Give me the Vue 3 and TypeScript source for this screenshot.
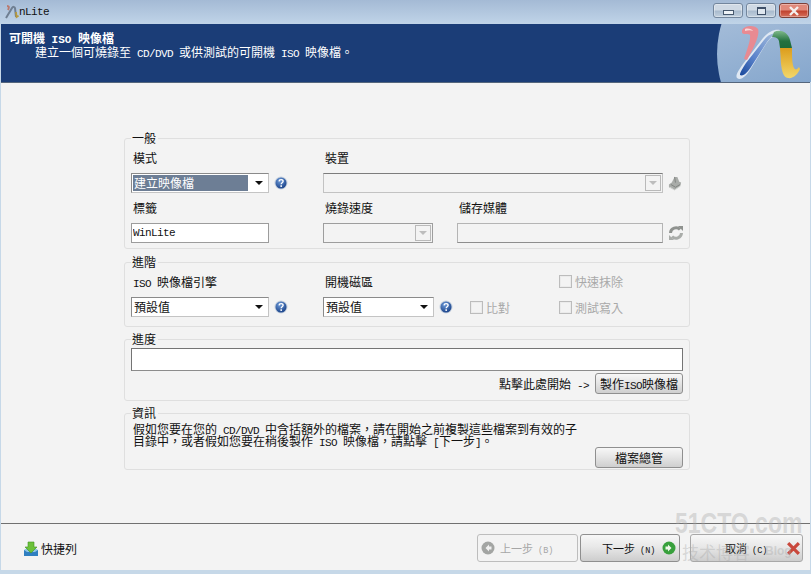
<script setup lang="ts">
const helpIcon = '#icon-help'
</script>

<template>
  <div class="window">
    <svg class="defs" width="0" height="0" aria-hidden="true">
      <defs>
        <radialGradient id="help-fill" cx="40%" cy="30%" r="75%">
          <stop offset="0" stop-color="#6d9ad8" />
          <stop offset="1" stop-color="#173f86" />
        </radialGradient>
        <symbol id="icon-help" viewBox="0 0 14 14">
          <circle cx="7" cy="7" r="6.5" fill="#c5d0de" />
          <circle cx="7" cy="7" r="5.5" fill="url(#help-fill)" />
          <path d="M5 5.4c.2-1.300 1.100-1.800 2.100-1.800 1.200 0 2 .7 2 1.700 0 1.500-1.900 1.500-1.900 2.900" fill="none" stroke="#fff" stroke-width="1.400" />
          <rect x="6.400" y="9.300" width="1.600" height="1.600" fill="#fff" />
        </symbol>
      </defs>
    </svg>

    <div class="titlebar">
      <svg class="app-icon" viewBox="0 0 16 16" width="16" height="16">
        <path d="M3 14 9 4c1-1.600 2.500-1.400 3 0l1 9" fill="none" stroke="#6f7f92" stroke-width="2" />
        <path d="M4 2c2 0 2.500 1 1 4" fill="none" stroke="#b9796f" stroke-width="2" />
        <path d="M13 8l.6 5 2-1.200" fill="none" stroke="#b79a3c" stroke-width="1.800" />
      </svg>
      <span class="lat app-name">nLite</span>
      <div class="win-buttons">
        <div class="win-btn">
          <span class="glyph-min"></span>
        </div>
        <div class="win-btn">
          <span class="glyph-max"></span>
        </div>
        <div class="win-btn win-btn--close">
          <svg viewBox="0 0 12 10" width="12" height="10">
            <path d="M2 1l8 8M10 1 2 9" stroke="#f4f0ee" stroke-width="2.400" />
          </svg>
        </div>
      </div>
    </div>

    <header class="banner">
      <div class="banner__text">
        <div class="banner__title">可開機<span class="lat"> ISO </span>映像檔</div>
        <div class="banner__sub">建立一個可燒錄至<span class="lat"> CD/DVD </span>或供測試的可開機<span class="lat"> ISO </span>映像檔。</div>
      </div>
      <svg class="banner__logo" viewBox="0 0 94 58" width="94" height="58">
        <defs>
          <linearGradient id="disc" x1="0" y1="0" x2="0.3" y2="1">
            <stop offset="0" stop-color="#bccde2" />
            <stop offset="1" stop-color="#6f97c4" />
          </linearGradient>
          <linearGradient id="arch" x1="0" y1="0" x2="0" y2="1">
            <stop offset="0" stop-color="#7fb98a" />
            <stop offset="0.6" stop-color="#23713f" />
            <stop offset="1" stop-color="#1d6b39" />
          </linearGradient>
          <linearGradient id="stem" x1="0" y1="0" x2="0" y2="1">
            <stop offset="0" stop-color="#dc9d1c" />
            <stop offset="1" stop-color="#f3d76a" />
          </linearGradient>
          <linearGradient id="rise" x1="0" y1="1" x2="1" y2="0">
            <stop offset="0" stop-color="#17479b" />
            <stop offset="0.4" stop-color="#5b83cb" />
            <stop offset="1" stop-color="#a8c0dc" />
          </linearGradient>
        </defs>
        <circle cx="103" cy="30" r="103" fill="url(#disc)" />
        <path d="M20 54c-2-3 2-8 6-14L46 14c6-7 12-9 17-8l-3 6c-4 0-7 2-11 8L33 46c-4 6-9 11-13 8z" fill="#dfe8f3" />
        <path d="M23 51c0-3 3-7 6-12L47 16c4-5 8-7 13-7-4 2-7 5-10 9L34 43c-3 5-8 10-11 8z" fill="url(#rise)" />
        <path d="M25 6c3-5 13-5 16-1 2 5-3 17-11 31l-3-1c3-9 7-20 6-24-1-2-6 0-8-2z" fill="#e88a92" />
        <path d="M28 5c3-1 7 0 8 2-2-1-5-1-8 0z" fill="#f8d7da" />
        <path d="M57 8c6-3 14 0 16 8l2 8H63l-1-7c-1-3-3-4-7-4z" fill="url(#arch)" />
        <path d="M63 24h12c0 8 0 16 2 20 1 2 3 2 5-1l1 2c-2 5-7 10-12 9-5-1-6-7-7-14z" fill="url(#stem)" />
      </svg>
    </header>

    <main class="content">
      <section class="group group--general">
        <span class="legend">一般</span>
        <span class="label col-a">模式</span>
        <span class="label col-c">裝置</span>

        <div class="combo col-a">
          <span class="combo__value combo__value--selected">建立映像檔</span>
          <span class="arrow"></span>
        </div>
        <svg class="help" width="14" height="14"><use :href="helpIcon" /></svg>
        <div class="combo combo--off col-device">
          <span class="combo__value"></span>
          <span class="drop-off"><span class="arrow arrow--off"></span></span>
        </div>
        <svg class="side-icon" viewBox="0 0 16 16" width="15" height="15">
          <path d="M7 1h3l2 5 2 1-1 4-6 4-6-3v-3l3-2z" fill="#a9aca9" />
          <path d="M3 9l5 3 5-3M7 1l1 6" fill="none" stroke="#7f827f" />
          <path d="M2 12l5 3 6-4" fill="none" stroke="#d8dad8" />
        </svg>

        <span class="label col-a">標籤</span>
        <span class="label col-c">燒錄速度</span>
        <span class="label col-e">儲存媒體</span>

        <input class="field col-a" value="WinLite" />
        <span></span>
        <div class="combo combo--off combo--inset col-c">
          <span class="combo__value"></span>
          <span class="drop-off"><span class="arrow arrow--off"></span></span>
        </div>
        <span></span>
        <div class="field field--off col-e"></div>
        <svg class="side-icon" viewBox="0 0 16 16" width="16" height="16">
          <path d="M2.500 8a5.500 5.500 0 0 1 9.500-3.500" fill="none" stroke="#8f928f" stroke-width="3" />
          <path d="M10 1h5v5z" fill="#8f928f" />
          <path d="M13.500 8a5.500 5.500 0 0 1-9.500 3.500" fill="none" stroke="#a9aca9" stroke-width="3" />
          <path d="M6 15H1v-5z" fill="#a9aca9" />
        </svg>
      </section>

      <section class="group group--advanced">
        <span class="legend">進階</span>
        <span class="label col-a"><span class="lat">ISO </span>映像檔引擎</span>
        <span class="label col-c">開機磁區</span>
        <label class="check col-f"><span class="check__box"></span>快速抹除</label>

        <div class="combo col-a">
          <span class="combo__value">預設值</span>
          <span class="arrow"></span>
        </div>
        <svg class="help" width="14" height="14"><use :href="helpIcon" /></svg>
        <div class="combo col-c">
          <span class="combo__value">預設值</span>
          <span class="arrow"></span>
        </div>
        <svg class="help" width="14" height="14"><use :href="helpIcon" /></svg>
        <label class="check"><span class="check__box"></span>比對</label>
        <label class="check"><span class="check__box"></span>測試寫入</label>
      </section>

      <section class="group group--progress">
        <span class="legend">進度</span>
        <div class="progress"></div>
        <div class="progress__row">
          <span>點擊此處開始<span class="lat"> -&gt;</span></span>
          <button class="btn" type="button">製作<span class="lat">ISO</span>映像檔</button>
        </div>
      </section>

      <section class="group group--info">
        <span class="legend">資訊</span>
        <p class="info">
          假如您要在您的<span class="lat"> CD/DVD </span>中含括額外的檔案&#xFF0C;請在開始之前複製這些檔案到有效的子<br />
          目錄中&#xFF0C;或者假如您要在稍後製作<span class="lat"> ISO </span>映像檔&#xFF0C;請點擊<span class="lat"> [</span>下一步<span class="lat">]</span>。
        </p>
        <button class="btn btn--end" type="button">檔案總管</button>
      </section>
    </main>

    <footer class="footer">
      <a class="shortcut">
        <svg viewBox="0 0 16 16" width="16" height="16">
          <path d="M1 9h14v6H1z" fill="#2f7fc0" />
          <path d="M1 9l3-2h8l3 2-3 2H4z" fill="#8dc2e6" />
          <path d="M5 1h6v5h3l-6 6-6-6h3z" fill="#6cc13a" stroke="#3f9423" stroke-width=".6" />
        </svg>
        快捷列
      </a>
      <div class="nav">
        <button class="nav-btn nav-btn--off" type="button">
          <svg viewBox="0 0 14 14" width="14" height="14">
            <circle cx="7" cy="7" r="6.500" fill="#a3a5a3" />
            <path d="M8 3.500 4.500 7 8 10.500V8.500h2.500v-3H8z" fill="#f0f0f0" />
          </svg>
          <span>上一步<span class="lat"> (B)</span></span>
        </button>
        <button class="nav-btn nav-btn--next" type="button">
          <span>下一步<span class="lat"> (N)</span></span>
          <svg viewBox="0 0 14 14" width="14" height="14">
            <circle cx="7" cy="7" r="6.500" fill="#38a03c" />
            <path d="M6 3.500 9.500 7 6 10.500V8.500H3.500v-3H6z" fill="#eef7ea" />
          </svg>
        </button>
        <button class="nav-btn nav-btn--cancel" type="button">
          <span>取消<span class="lat"> (C)</span></span>
          <svg viewBox="0 0 14 14" width="15" height="15">
            <path d="M2 2l10 10M12 2 2 12" stroke="#c9483c" stroke-width="3" />
          </svg>
        </button>
      </div>
    </footer>

    <div class="watermark" aria-hidden="true">
      <div class="watermark__site">51CTO.com</div>
      <div class="watermark__tag">技术博客<span>Blog</span></div>
    </div>
  </div>
</template>

<style>
html,
body {
  margin: 0;
  overflow: hidden;
}
</style>

<style scoped>
.window {
  position: relative;
  width: 811px;
  height: 574px;
  box-sizing: border-box;
  padding: 0 1px 4px;
  display: flex;
  flex-direction: column;
  background: #c6d8e8;
  color: #111;
  font-family: "Noto Sans CJK TC", "Liberation Sans", sans-serif;
  font-size: 12px;
  line-height: 17px;
  overflow: hidden;
}
.defs {
  position: absolute;
}
.lat {
  font-family: "Liberation Mono", monospace;
  font-size: 11px;
  letter-spacing: -0.6px;
  line-height: 0;
  white-space: pre;
}

/* title bar */
.titlebar {
  height: 24px;
  margin: 0 -1px;
  padding: 0 2px 0 3px;
  flex: none;
  display: flex;
  align-items: center;
  background: linear-gradient(#a4bad5, #c0d4e8);
}
.win-buttons {
  margin-left: auto;
  margin-top: -3px;
  display: flex;
  gap: 3px;
}
.win-btn {
  width: 30px;
  height: 15px;
  box-sizing: border-box;
  border: 1px solid #73869d;
  border-radius: 3px;
  display: flex;
  align-items: center;
  justify-content: center;
  background: linear-gradient(#cfd9e4 45%, #a9bbce 55%, #c2d0de);
  box-shadow: inset 0 0 0 1px rgba(255, 255, 255, 0.35);
}
.win-btn--close {
  border-color: #7c4038;
  background: linear-gradient(#e0897a 45%, #c1432f 55%, #d5705c);
}
.glyph-min {
  width: 9px;
  height: 3px;
  margin-top: 3px;
  background: #eef2f6;
  border: 1px solid #47586d;
}
.glyph-max {
  width: 7px;
  height: 5px;
  border: 1px solid #3f5068;
  border-top-width: 2px;
  background: #dfe7ef;
}

/* banner */
.banner {
  height: 59px;
  box-sizing: border-box;
  flex: none;
  display: flex;
  justify-content: space-between;
  background: #1b3d77;
  border-bottom: 1px solid #55667c;
  color: #fff;
}
.banner__text {
  padding: 7px 0 0 8px;
  line-height: 14px;
}
.banner__title {
  height: 14px;
  font-weight: 700;
}
.banner__title .lat {
  font-weight: 700;
  letter-spacing: 0;
}
.banner__sub {
  height: 14px;
  padding-left: 26px;
}
.banner__logo {
  flex: none;
  margin-right: -1px;
}

/* page body */
.content {
  flex: 1;
  min-height: 0;
  padding: 55px 0 0 123px;
  display: flex;
  flex-direction: column;
  gap: 12px;
  background: #f3f3f3;
}
.group {
  position: relative;
  width: 566px;
  box-sizing: border-box;
  border: 1px solid #dfdfdf;
  border-radius: 3px;
  flex: none;
}
.legend {
  position: absolute;
  top: -10px;
  left: 6px;
  padding: 0 2px 0 1px;
  background: #f3f3f3;
}
.group--general {
  height: 111px;
  margin-bottom: 1px;
  padding: 11px 0 0 6px;
  display: grid;
  grid-template-columns: 138px 54px 110px 24px 206px 26px;
  grid-template-rows: 23px 20px 30px 20px;
}
.group--advanced {
  height: 65px;
  padding: 11px 0 0 6px;
  display: grid;
  grid-template-columns: 138px 54px 111px 36px 89px 100px;
  grid-template-rows: 23px 20px;
}
.label {
  height: 17px;
  align-self: end;
  margin: 0 0 7px 2px;
  white-space: nowrap;
}
.col-a {
  grid-column: 1;
}
.col-c {
  grid-column: 3;
}
.col-e {
  grid-column: 5;
}
.col-device {
  grid-column: 3 / span 3;
}
.combo {
  height: 20px;
  box-sizing: border-box;
  border: 1px solid #8a8a8a;
  border-bottom-color: #c4c4c4;
  border-right-color: #c4c4c4;
  background: #fff;
  display: flex;
  align-items: center;
  padding: 0 1px;
}
.combo__value {
  flex: 1;
  height: 16px;
  line-height: 16px;
  padding-left: 1px;
  font-size: 12px;
}
.combo__value--selected {
  background: #6d7e95;
  color: #fff;
}
.arrow {
  width: 0;
  height: 0;
  margin: 0 4px 0 7px;
  border: 4px solid transparent;
  border-top: 4px solid #111;
  border-bottom: 0;
}
.combo--off {
  background: #f3f3f3;
  border-color: #7c7c7c #c2c2c2 #c2c2c2 #c2c2c2;
}
.combo--inset {
  border-color: #9d9d9d;
}
.drop-off {
  width: 14px;
  height: 14px;
  border: 1px solid #b9b9b9;
  display: flex;
  align-items: center;
  justify-content: center;
}
.arrow--off {
  margin: 0;
  border-top-color: #bdbdbd;
}
.help {
  align-self: center;
  margin-left: 5px;
}
.side-icon {
  align-self: center;
  margin-left: 5px;
}
.field {
  box-sizing: border-box;
  height: 20px;
  width: 100%;
  margin: 0;
  padding: 0 1px;
  border: 1px solid #9c9c9c;
  border-radius: 0;
  outline: none;
  background: #fff;
  color: #111;
  font-family: "Liberation Mono", monospace;
  font-size: 11px;
  letter-spacing: -0.6px;
}
.field--off {
  background: #f3f3f3;
  border-color: #b4b4b4;
  border-bottom-color: #8e8e8e;
}
.check {
  align-self: center;
  display: flex;
  align-items: center;
  gap: 3px;
  height: 17px;
  color: #a9a9a9;
}
.check.col-f {
  grid-column: 6;
  align-self: start;
  margin-top: -1px;
}
.check__box {
  width: 11px;
  height: 11px;
  border: 1px solid #bcbcbc;
  box-shadow: inset 0 0 0 1px #ebebeb;
}

.group--progress {
  height: 62px;
  padding: 8px 6px 0 6px;
}
.progress {
  height: 23px;
  box-sizing: border-box;
  border: 1px solid #747474;
  border-bottom-color: #8c8c8c;
  background: #fff;
}
.progress__row {
  margin-top: 2px;
  display: flex;
  align-items: center;
  justify-content: flex-end;
  gap: 6px;
}
.btn {
  width: 88px;
  height: 21px;
  padding: 0;
  box-sizing: border-box;
  border: 1px solid #8f8f8f;
  border-radius: 3px;
  background: linear-gradient(#f7f7f7, #e6e6e6 45%, #cfcfcf);
  color: #111;
  font: inherit;
  line-height: 19px;
}
.group--info {
  height: 57px;
  padding: 9px 6px 4px 8px;
  display: flex;
  flex-direction: column;
}
.info {
  margin: 0;
  line-height: 12px;
  white-space: nowrap;
}
.btn--end {
  margin-top: auto;
  align-self: flex-end;
}

/* footer */
.footer {
  height: 47px;
  box-sizing: border-box;
  flex: none;
  display: flex;
  align-items: flex-start;
  justify-content: space-between;
  padding: 10px 7px 0 22px;
  background: #f3f3f3;
  border-top: 1px solid #707070;
}
.shortcut {
  margin-top: 6px;
  display: flex;
  align-items: center;
  gap: 2px;
}
.nav {
  display: flex;
}
.nav-btn {
  height: 28px;
  padding: 0;
  box-sizing: border-box;
  border: 1px solid #8f8f8f;
  border-radius: 3px;
  display: flex;
  align-items: center;
  background: linear-gradient(#f7f7f7, #e8e8e8 45%, #cdcdcd);
  color: #111;
  font: inherit;
  font-size: 11px;
}
.nav-btn .lat {
  font-size: 8.500px;
  letter-spacing: 0;
}
.nav-btn--off {
  width: 101px;
  margin-right: 2px;
  padding-left: 3px;
  gap: 5px;
  background: #f3f3f3;
  border-color: #bdbdbd;
  color: #a6a6a6;
}
.nav-btn--next {
  width: 100px;
  margin-right: 10px;
  padding-left: 21px;
  gap: 7px;
}
.nav-btn--cancel {
  width: 113px;
  padding-left: 34px;
  gap: 19px;
  border-color: #a8a8a8;
}

.watermark {
  position: absolute;
  left: 675px;
  top: 507px;
  width: 130px;
  pointer-events: none;
  color: rgba(170, 170, 170, 0.4);
}
.watermark__site {
  height: 28px;
  font-family: "Liberation Sans", sans-serif;
  font-size: 23px;
  line-height: 24px;
  font-weight: 700;
  white-space: nowrap;
  transform: scaleY(1.3);
  transform-origin: top left;
}
.watermark__tag {
  margin: 6px 0 0 7px;
  font-family: "Noto Sans CJK SC", sans-serif;
  font-size: 17px;
  line-height: 20px;
  white-space: nowrap;
}
.watermark__tag span {
  margin-left: 15px;
  font-family: "Liberation Sans", sans-serif;
  font-size: 12px;
  font-weight: 700;
  vertical-align: 4px;
}
</style>
